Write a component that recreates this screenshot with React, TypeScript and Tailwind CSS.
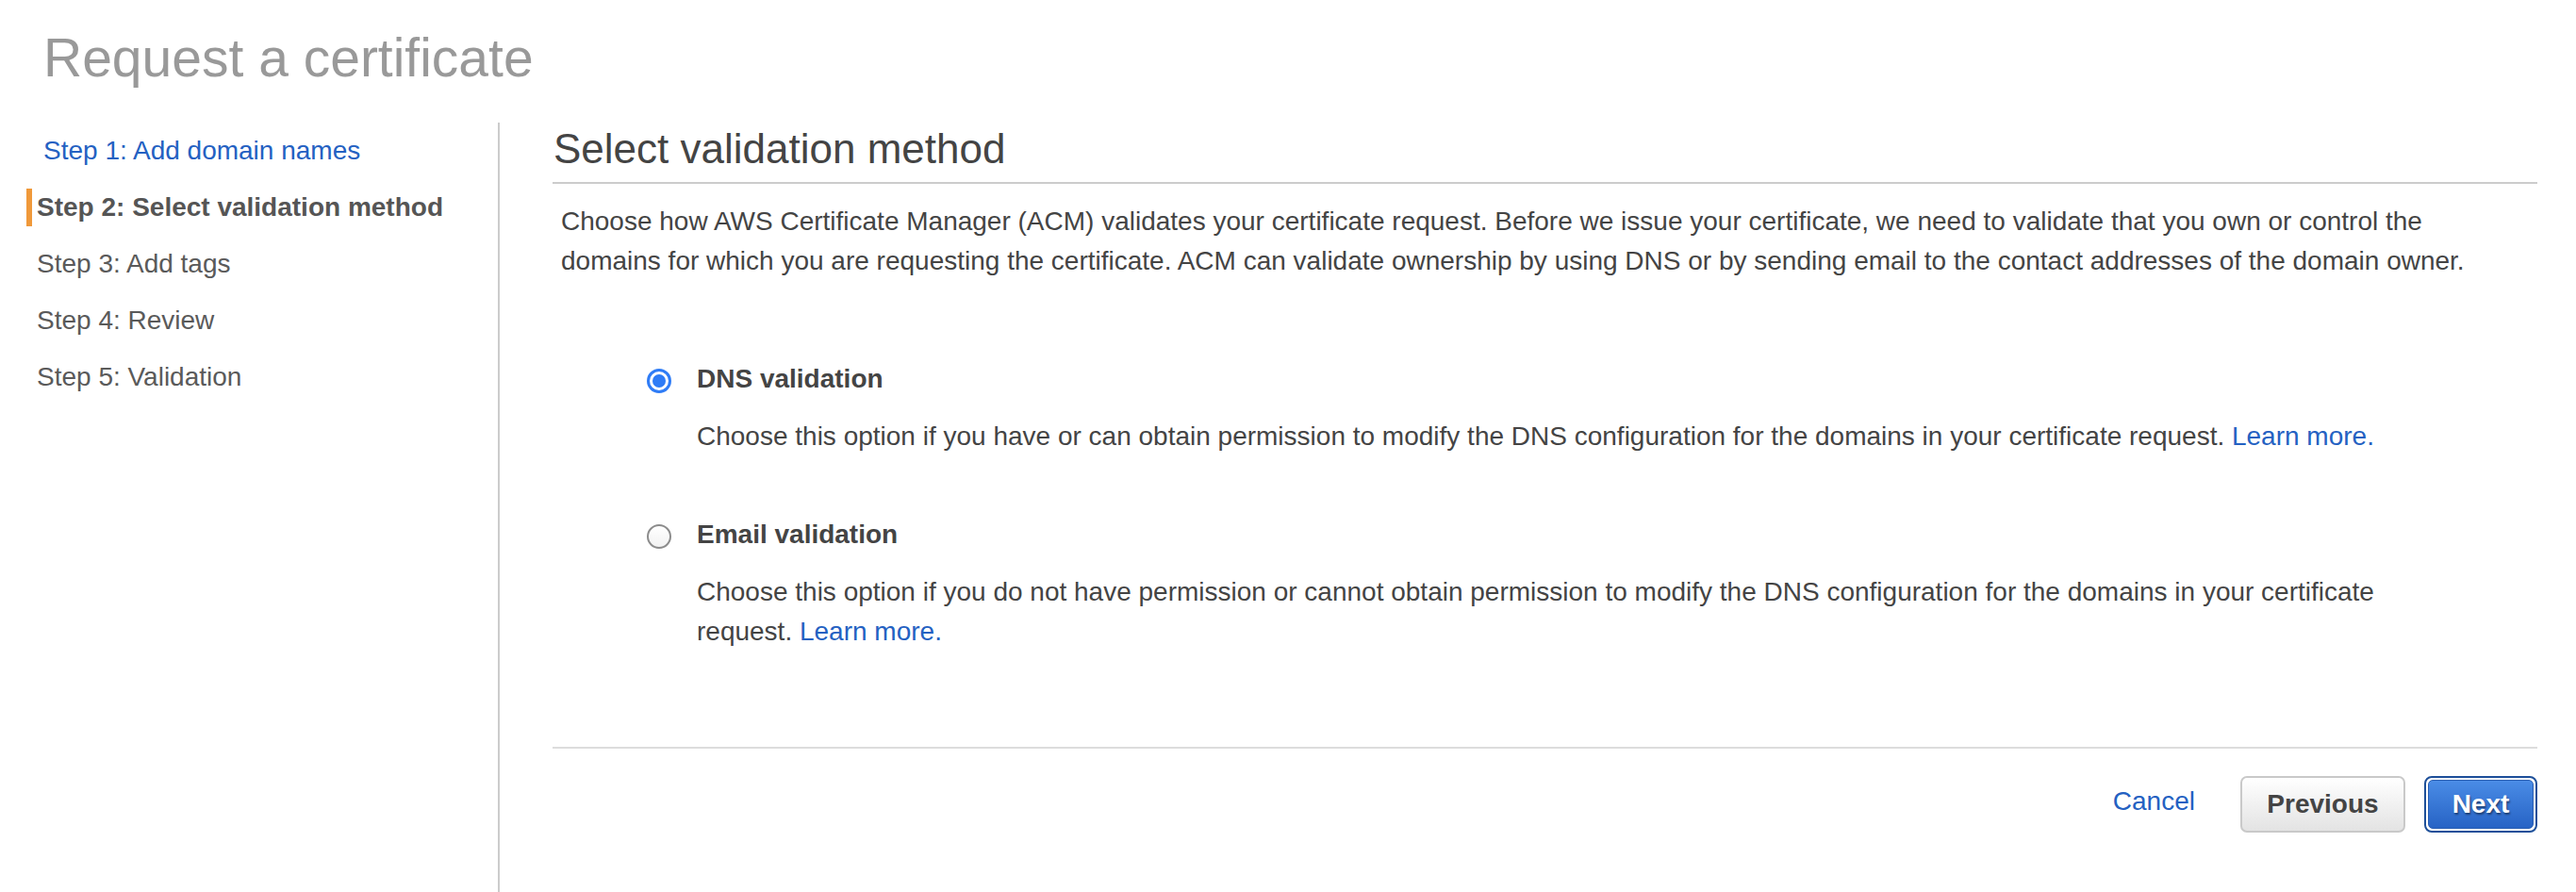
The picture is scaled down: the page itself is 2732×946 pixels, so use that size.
const steps = [
  { label: "Step 1: Add domain names", state: "link" },
  { label: "Step 2: Select validation method", state: "active" },
  { label: "Step 3: Add tags", state: "todo" },
  { label: "Step 4: Review", state: "todo" },
  { label: "Step 5: Validation", state: "todo" },
];

const Radio = (props: { checked: boolean }) =>
  props.checked ? (
    <div className="w-[26px] h-[26px] rounded-full border-[3px] border-[#2f7cf6] bg-white flex items-center justify-center">
      <div className="w-[14px] h-[14px] rounded-full bg-[#2f7cf6]"></div>
    </div>
  ) : (
    <div className="w-[26px] h-[26px] rounded-full border-2 border-[#8c8c8c] bg-linear-to-b from-white to-[#f2f2f2]"></div>
  );

const Option = (props: { checked: boolean; title: string; text: string; className?: string }) => (
  <div className={`flex flex-col pl-[100px] ${props.className ?? ""}`}>
    <div className="flex items-center h-[42px]">
      <div className="w-[53px] shrink-0 mt-[3px]">
        <Radio checked={props.checked} />
      </div>
      <div className="font-bold text-[#444]">{props.title}</div>
    </div>
    <div className="mt-[19px] pl-[53px] pr-[91px] text-[#444]">
      {props.text} <a className="text-[#2461c2] cursor-pointer">Learn more.</a>
    </div>
  </div>
);

export default function App() {
  return (
    <div className="w-[2732px] h-[946px] bg-white flex flex-col font-['Liberation_Sans',Arial,sans-serif] text-[28px] leading-[42px] overflow-hidden">
      <div className="h-[130px] shrink-0 pt-[33px] pl-[46px]">
        <h1 className="text-[57px] leading-[56px] text-[#999]">Request a certificate</h1>
      </div>
      <div className="flex flex-1">
        <div className="w-[530px] shrink-0 border-r-2 border-[#cccccc] flex flex-col">
          {steps.map((s) => (
            <div key={s.label} className="h-[60px] flex items-center leading-[60px]">
              {s.state === "active" ? (
                <>
                  <div className="ml-[28px] w-[6px] h-[40px] bg-[#f0993a]"></div>
                  <div className="pl-[5px] font-bold text-[#555]">{s.label}</div>
                </>
              ) : s.state === "link" ? (
                <a className="pl-[46px] text-[#2461c2] cursor-pointer">{s.label}</a>
              ) : (
                <div className="pl-[39px] text-[#5a5a5a]">{s.label}</div>
              )}
            </div>
          ))}
        </div>
        <div className="flex-1 pl-[56px] pr-[41px] flex flex-col">
          <h2 className="pt-[3px] pb-[10px] pl-[1px] text-[44px] leading-[50px] text-[#444] border-b-2 border-[#cccccc]">
            Select validation method
          </h2>
          <p className="mt-[19px] pl-[9px] pr-[50px] text-[#444]">
            Choose how AWS Certificate Manager (ACM) validates your certificate request. Before we issue your certificate, we need to validate that you own or control the domains for which you are requesting the certificate. ACM can validate ownership by using DNS or by sending email to the contact addresses of the domain owner.
          </p>
          <Option
            className="mt-[83px]"
            checked={true}
            title="DNS validation"
            text="Choose this option if you have or can obtain permission to modify the DNS configuration for the domains in your certificate request."
          />
          <Option
            className="mt-[62px]"
            checked={false}
            title="Email validation"
            text="Choose this option if you do not have permission or cannot obtain permission to modify the DNS configuration for the domains in your certificate request."
          />
          <div className="mt-[101px] border-t-2 border-[#dddddd]"></div>
          <div className="mt-[29px] flex justify-end items-center">
            <a className="pb-[6px] text-[#2461c2] cursor-pointer">Cancel</a>
            <button className="ml-[48px] w-[175px] h-[60px] rounded-[7px] border-2 border-[#c9c9c9] bg-linear-to-b from-white to-[#e3e3e3] font-bold text-[#444]">
              Previous
            </button>
            <button className="ml-[20px] w-[120px] h-[60px] rounded-[8px] border-2 border-[#1d4f99] bg-white p-[2px]">
              <div className="w-full h-full rounded-[5px] border border-[#2b5fb3] bg-linear-to-b from-[#4a8ce6] to-[#2763c5] flex items-center justify-center font-bold text-white [text-shadow:1px_2px_2px_rgba(0,0,0,0.45)]">
                Next
              </div>
            </button>
          </div>
        </div>
      </div>
    </div>
  );
}
